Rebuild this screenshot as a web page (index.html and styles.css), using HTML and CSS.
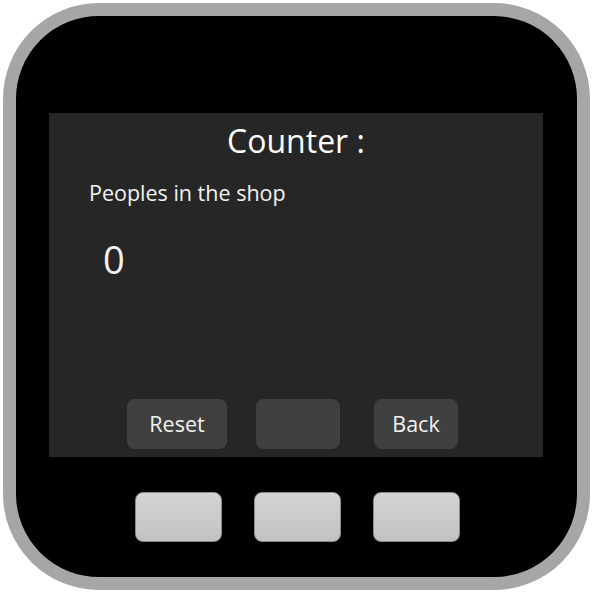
FILE: index.html
```html
<!DOCTYPE html>
<html>
<head>
<meta charset="utf-8">
<link rel="stylesheet" href="styles.css">
</head>
<body>
<div class="device">
  <div class="screen">
    <div class="title">Counter :</div>
    <div class="label">Peoples in the shop</div>
    <div class="count">0</div>
    <div class="soft-buttons">
      <div class="soft reset">Reset</div>
      <div class="soft mid"></div>
      <div class="soft back">Back</div>
    </div>
  </div>
  <div class="hard-buttons">
    <div class="hard"></div>
    <div class="hard"></div>
    <div class="hard"></div>
  </div>
</div>
</body>
</html>
```

FILE: styles.css
```css
html, body {
  margin: 0;
  padding: 0;
  background: #ffffff;
}
body {
  padding: 3px;
  font-family: "Open Sans", "Noto Sans", sans-serif;
}
.device {
  box-sizing: border-box;
  width: 587px;
  height: 587px;
  border: 13px solid #a6a6a6;
  border-radius: 96px;
  background: #000000;
  padding: 97px 0 0 33px;
  display: flex;
  flex-direction: column;
}
.screen {
  width: 494px;
  height: 344px;
  background: #262626;
  color: #ffffff;
  display: flex;
  flex-direction: column;
  position: relative;
}
.title {
  text-align: center;
  font-size: 32px;
  line-height: 36px;
  margin-top: 10px;
}
.label {
  font-size: 21.5px;
  line-height: 26px;
  margin-top: 21px;
  margin-left: 40px;
  color: #f2f2f2;
}
.count {
  font-size: 38px;
  line-height: 50px;
  margin-top: 28px;
  margin-left: 54px;
  color: #f2f2f2;
}
.soft-buttons {
  margin-top: auto;
  margin-bottom: 8px;
  display: flex;
  padding-left: 78px;
}
.soft {
  height: 50px;
  width: 84px;
  border-radius: 8px;
  background: #404040;
  color: #f2f2f2;
  font-size: 21.5px;
  padding-bottom: 2px;
  box-sizing: border-box;
  display: flex;
  align-items: center;
  justify-content: center;
}
.soft.reset {
  width: 100px;
}
.soft.mid {
  margin-left: 29px;
}
.soft.back {
  margin-left: 34px;
}
.hard-buttons {
  display: flex;
  margin-top: 35px;
  padding-left: 86px;
  gap: 32px;
}
.hard {
  box-sizing: border-box;
  width: 87px;
  height: 50px;
  border: 1px solid #8c8c8c;
  border-radius: 8px;
  background: linear-gradient(#d4d4d4, #c2c2c2);
}
```
